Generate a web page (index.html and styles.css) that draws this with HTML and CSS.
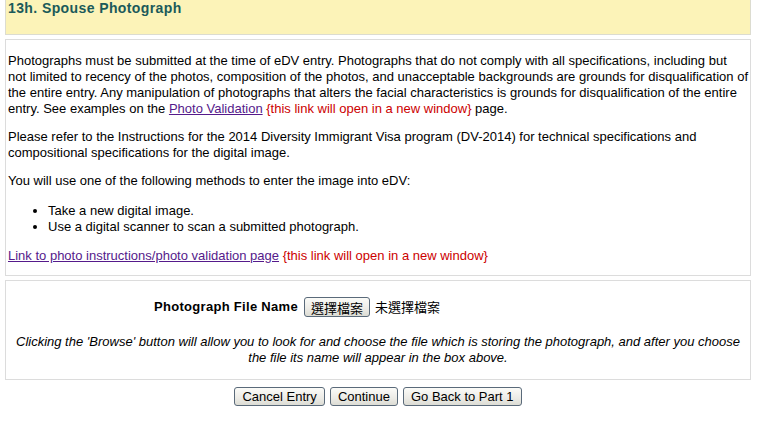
FILE: index.html
```html
<!DOCTYPE html>
<html lang="en">
<head>
  <meta charset="UTF-8" />
  <title>13h. Spouse Photograph</title>
  <link rel="stylesheet" href="styles.css">
</head>
<body>

  <div class="section-head">
    <h2>13h. Spouse Photograph</h2>
  </div>

  <div class="box info">
    <p>Photographs must be submitted at the time of eDV entry. Photographs that do not comply with all specifications, including but not&nbsp;limited to recency of the photos, composition of the photos, and unacceptable backgrounds are grounds for disqualification of the entire entry. Any manipulation of photographs that alters the facial characteristics is grounds for disqualification of the entire entry. See examples on the <a href="#">Photo Validation</a> <span class="note">{this link will open in a new window}</span> page.</p>
    <p>Please refer to the Instructions for the 2014 Diversity Immigrant Visa program (DV-2014) for technical specifications and compositional specifications for the digital image.</p>
    <p>You will use one of the following methods to enter the image into eDV:</p>
    <ul>
      <li>Take a new digital image.</li>
      <li>Use a digital scanner to scan a submitted photograph.</li>
    </ul>
    <p><a href="#">Link to photo instructions/photo validation page</a> <span class="note">{this link will open in a new window}</span></p>
  </div>

  <div class="box upload">
    <div class="file-row">
      <label class="file-label">Photograph File Name</label>
      <div class="file-input">
        <button type="button" class="btn file-btn">選擇檔案</button>
        <span class="file-none">未選擇檔案</span>
      </div>
    </div>
    <p class="hint">Clicking the 'Browse' button will allow you to look for and choose the file which is storing the photograph, and after you choose the file its name will appear in the box above.</p>
  </div>

  <div class="actions">
    <button type="button" class="btn">Cancel Entry</button>
    <button type="button" class="btn">Continue</button>
    <button type="button" class="btn">Go Back to Part 1</button>
  </div>

</body>
</html>
```

FILE: styles.css
```css
body {
  margin: 0;
  padding: 0 6px 0 5px;
  font-family: "Liberation Sans", Arial, sans-serif;
  font-size: 13px;
  line-height: 16px;
  color: #000;
  background: #fff;
}

.section-head {
  background-color: #fcf3b8;
  border: 1px solid #dcdcd0;
  border-top: none;
  height: 34px;
  padding: 0 2px;
}

.section-head h2 {
  margin: 0;
  font-size: 14px;
  letter-spacing: 0.4px;
  line-height: 16px;
  font-weight: bold;
  color: #1b5a5a;
}

.box {
  border: 1px solid #dcdcdc;
  margin-top: 4px;
  padding: 0 2px;
}

.info {
  padding-right: 0;
}

.info p {
  margin: 13px 0 12px;
}

.info p + p {
  margin-top: 12px;
}

.info p:last-child {
  margin-bottom: 11px;
}

.info ul {
  margin: 14px 0 13px;
  padding-left: 40px;
}

a {
  color: #551a8b;
}

.note {
  color: #cc0000;
}

.upload {
  margin-top: 4px;
  height: 98px;
}

.file-row {
  display: flex;
  align-items: center;
  justify-content: center;
  gap: 6px;
  margin-top: 16px;
}

.file-label {
  font-weight: bold;
  letter-spacing: 0.3px;
}

.file-input {
  display: flex;
  align-items: center;
  gap: 5px;
  width: 298px;
}

.file-none {
  font-family: "Noto Sans CJK TC", sans-serif;
  font-size: 13px;
}

.hint {
  font-style: italic;
  text-align: center;
  margin: 17px 0 0;
  padding: 0 4px;
}

.btn {
  font-family: "Liberation Sans", Arial, sans-serif;
  font-size: 13px;
  line-height: 15px;
  height: 19px;
  padding: 0 7px;
  border: 1px solid #5a6a7a;
  border-radius: 3px;
  background: linear-gradient(#fbfbf8, #ecebe6 60%, #dcdcd4);
  color: #000;
}

.file-btn {
  font-family: "Noto Sans CJK TC", sans-serif;
  height: 20px;
  padding: 0 6px;
}

.actions {
  display: flex;
  justify-content: center;
  gap: 5px;
  margin-top: 7px;
}
```
